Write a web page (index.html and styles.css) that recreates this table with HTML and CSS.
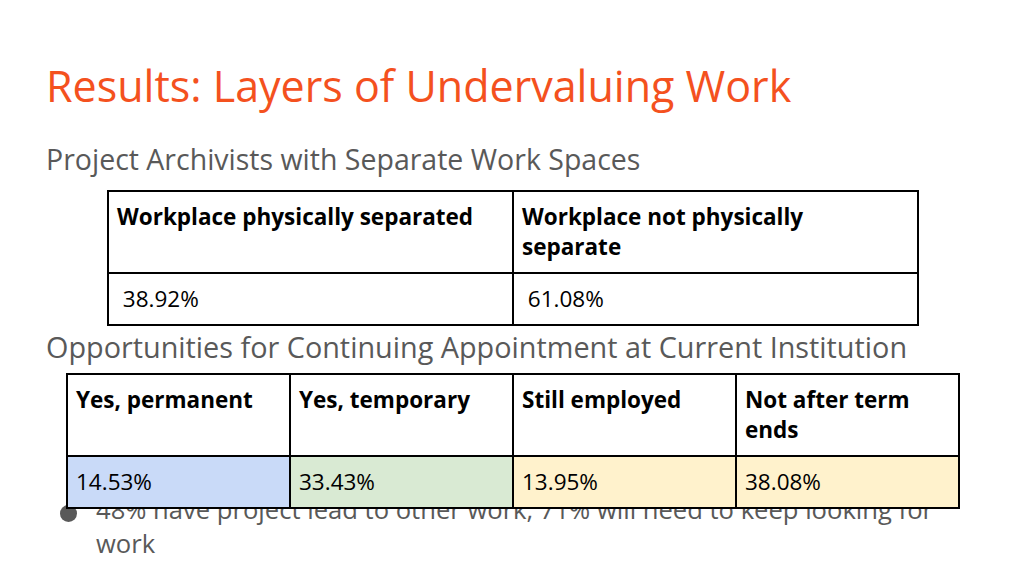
FILE: index.html
```html
<!DOCTYPE html>
<html lang="en">
<head>
<meta charset="utf-8">
<title>Results: Layers of Undervaluing Work</title>
<link rel="stylesheet" href="styles.css">
</head>
<body>
<div class="slide">
  <h1 class="title">Results: Layers of Undervaluing Work</h1>
  <h2 class="subtitle">Project Archivists with Separate Work Spaces</h2>
  <table class="grid grid-space">
    <tr>
      <th>Workplace physically separated</th>
      <th>Workplace not physically separate</th>
    </tr>
    <tr>
      <td>&nbsp;38.92%</td>
      <td>&nbsp;61.08%</td>
    </tr>
  </table>
  <h2 class="subtitle subtitle-2">Opportunities for Continuing Appointment at Current Institution</h2>
  <table class="grid grid-appt">
    <tr>
      <th>Yes, permanent</th>
      <th>Yes, temporary</th>
      <th>Still employed</th>
      <th>Not after term ends</th>
    </tr>
    <tr>
      <td class="c-blue">14.53%</td>
      <td class="c-green">33.43%</td>
      <td class="c-yellow">13.95%</td>
      <td class="c-yellow">38.08%</td>
    </tr>
  </table>
  <ul class="bullets">
    <li>48% have project lead to other work, 71% will need to keep looking for work</li>
  </ul>
</div>
</body>
</html>
```

FILE: styles.css
```css
* { box-sizing: border-box; }
html, body { margin: 0; padding: 0; background: #fff; }
.slide {
  width: 1024px;
  height: 576px;
  overflow: hidden;
  position: relative;
  font-family: "Open Sans", "Noto Sans", sans-serif;
  padding: 57px 0 0 46px;
}
.title {
  margin: 0;
  font-weight: 400;
  font-size: 43px;
  line-height: 58px;
  color: #f4511e;
}
.subtitle {
  margin: 26px 0 0 0;
  font-weight: 400;
  font-size: 28.5px;
  line-height: 36px;
  color: #595959;
}
.subtitle-2 { margin-top: 3px; font-size: 28.8px; }
.grid {
  border-collapse: collapse;
  table-layout: fixed;
  position: relative;
  z-index: 1;
  background: #fff;
  color: #000;
  font-size: 22.5px;
  line-height: 30px;
}
.grid th, .grid td {
  border: 2px solid #000;
  padding: 10px 9px 10px 8px;
  text-align: left;
  vertical-align: top;
}
.grid th { font-weight: 700; height: 82px; }
.grid td { font-weight: 400; height: 51px; }
.grid-space { margin: 13px 0 0 61px; width: 810px; }
.grid-space th, .grid-space td { width: 405px; }
.grid-appt { margin: 8px 0 0 20px; width: 892px; }
.grid-appt th, .grid-appt td { width: 223px; }
.c-blue { background: #c9daf8; }
.c-green { background: #d9ead3; }
.c-yellow { background: #fff2cc; }
.bullets {
  margin: -16px 0 0 0;
  padding: 0 0 0 50px;
  list-style: none;
  font-size: 25.6px;
  line-height: 34px;
  color: #595959;
  width: 930px;
}
.bullets li { position: relative; }
.bullets li::before {
  content: "";
  position: absolute;
  left: -36px;
  top: 12px;
  width: 17px;
  height: 17px;
  border-radius: 50%;
  background: #595959;
}
```
